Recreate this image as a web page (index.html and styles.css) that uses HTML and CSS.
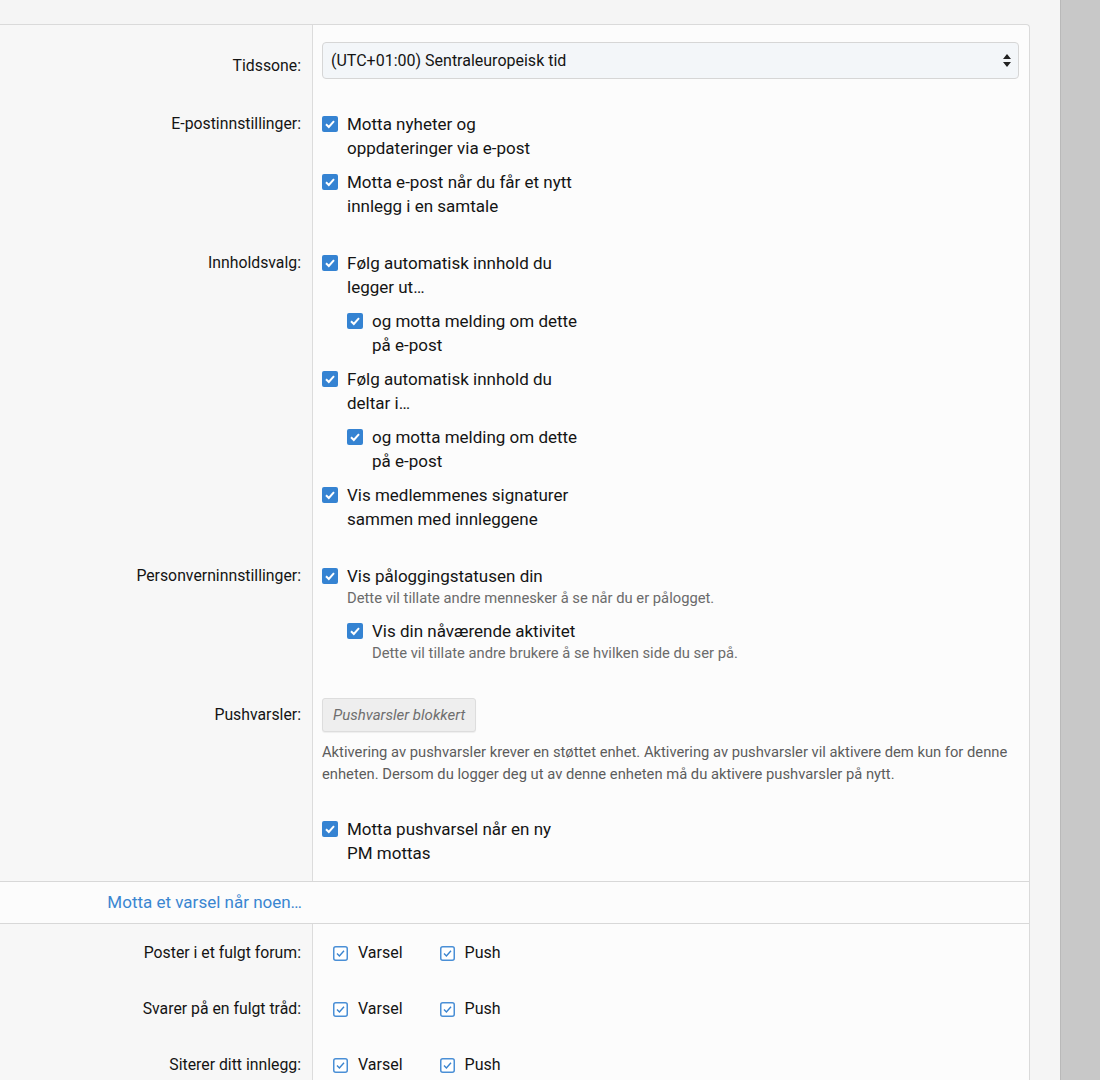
FILE: index.html
```html
<!DOCTYPE html>
<html lang="no">
<head>
  <meta charset="UTF-8" />
  <meta name="viewport" content="width=device-width, initial-scale=1.0"/>
  <title>Innstillinger</title>
  <link rel="stylesheet" href="styles.css">
</head>
<body>

  <div class="page">
    <main class="content">
      <div class="block">

        <dl class="form-row">
          <dt class="label-select">Tidssone:</dt>
          <dd>
            <div class="select">
              <span>(UTC+01:00) Sentraleuropeisk tid</span>
              <svg class="select-arrows" width="8" height="13" viewBox="0 0 8 13">
                <path d="M4 0 L8 5 L0 5 Z M0 8 L8 8 L4 13 Z" fill="#222"/>
              </svg>
            </div>
          </dd>
        </dl>

        <dl class="form-row">
          <dt>E-postinnstillinger:</dt>
          <dd>
            <ul class="choices">
              <li>
                <label class="choice">
                  <span class="check"><svg width="16" height="16" viewBox="0 0 16 16"><rect width="16" height="16" rx="2" fill="#3583d2"/><path d="M4 8.3 L6.8 11 L12 5.2" fill="none" stroke="#fff" stroke-width="2"/></svg></span>
                  <span class="choice-text">Motta nyheter og oppdateringer via e-post</span>
                </label>
              </li>
              <li>
                <label class="choice">
                  <span class="check"><svg width="16" height="16" viewBox="0 0 16 16"><rect width="16" height="16" rx="2" fill="#3583d2"/><path d="M4 8.3 L6.8 11 L12 5.2" fill="none" stroke="#fff" stroke-width="2"/></svg></span>
                  <span class="choice-text">Motta e-post når du får et nytt innlegg i en samtale</span>
                </label>
              </li>
            </ul>
          </dd>
        </dl>

        <dl class="form-row">
          <dt>Innholdsvalg:</dt>
          <dd>
            <ul class="choices">
              <li>
                <label class="choice">
                  <span class="check"><svg width="16" height="16" viewBox="0 0 16 16"><rect width="16" height="16" rx="2" fill="#3583d2"/><path d="M4 8.3 L6.8 11 L12 5.2" fill="none" stroke="#fff" stroke-width="2"/></svg></span>
                  <span class="choice-text">Følg automatisk innhold du legger ut…</span>
                </label>
                <ul class="choices choices-nested">
                  <li>
                    <label class="choice">
                      <span class="check"><svg width="16" height="16" viewBox="0 0 16 16"><rect width="16" height="16" rx="2" fill="#3583d2"/><path d="M4 8.3 L6.8 11 L12 5.2" fill="none" stroke="#fff" stroke-width="2"/></svg></span>
                      <span class="choice-text">og motta melding om dette på e-post</span>
                    </label>
                  </li>
                </ul>
              </li>
              <li>
                <label class="choice">
                  <span class="check"><svg width="16" height="16" viewBox="0 0 16 16"><rect width="16" height="16" rx="2" fill="#3583d2"/><path d="M4 8.3 L6.8 11 L12 5.2" fill="none" stroke="#fff" stroke-width="2"/></svg></span>
                  <span class="choice-text">Følg automatisk innhold du deltar i…</span>
                </label>
                <ul class="choices choices-nested">
                  <li>
                    <label class="choice">
                      <span class="check"><svg width="16" height="16" viewBox="0 0 16 16"><rect width="16" height="16" rx="2" fill="#3583d2"/><path d="M4 8.3 L6.8 11 L12 5.2" fill="none" stroke="#fff" stroke-width="2"/></svg></span>
                      <span class="choice-text">og motta melding om dette på e-post</span>
                    </label>
                  </li>
                </ul>
              </li>
              <li>
                <label class="choice">
                  <span class="check"><svg width="16" height="16" viewBox="0 0 16 16"><rect width="16" height="16" rx="2" fill="#3583d2"/><path d="M4 8.3 L6.8 11 L12 5.2" fill="none" stroke="#fff" stroke-width="2"/></svg></span>
                  <span class="choice-text">Vis medlemmenes signaturer sammen med innleggene</span>
                </label>
              </li>
            </ul>
          </dd>
        </dl>

        <dl class="form-row">
          <dt>Personverninnstillinger:</dt>
          <dd>
            <ul class="choices">
              <li>
                <label class="choice">
                  <span class="check"><svg width="16" height="16" viewBox="0 0 16 16"><rect width="16" height="16" rx="2" fill="#3583d2"/><path d="M4 8.3 L6.8 11 L12 5.2" fill="none" stroke="#fff" stroke-width="2"/></svg></span>
                  <span class="choice-text">Vis påloggingstatusen din</span>
                </label>
                <p class="hint">Dette vil tillate andre mennesker å se når du er pålogget.</p>
                <ul class="choices choices-nested">
                  <li>
                    <label class="choice">
                      <span class="check"><svg width="16" height="16" viewBox="0 0 16 16"><rect width="16" height="16" rx="2" fill="#3583d2"/><path d="M4 8.3 L6.8 11 L12 5.2" fill="none" stroke="#fff" stroke-width="2"/></svg></span>
                      <span class="choice-text">Vis din nåværende aktivitet</span>
                    </label>
                    <p class="hint">Dette vil tillate andre brukere å se hvilken side du ser på.</p>
                  </li>
                </ul>
              </li>
            </ul>
          </dd>
        </dl>

        <dl class="form-row">
          <dt class="label-button">Pushvarsler:</dt>
          <dd>
            <button class="button-disabled" type="button" disabled>Pushvarsler blokkert</button>
            <p class="explain">Aktivering av pushvarsler krever en støttet enhet. Aktivering av pushvarsler vil aktivere dem kun for denne enheten. Dersom du logger deg ut av denne enheten må du aktivere pushvarsler på nytt.</p>
            <ul class="choices push-choices">
              <li>
                <label class="choice">
                  <span class="check"><svg width="16" height="16" viewBox="0 0 16 16"><rect width="16" height="16" rx="2" fill="#3583d2"/><path d="M4 8.3 L6.8 11 L12 5.2" fill="none" stroke="#fff" stroke-width="2"/></svg></span>
                  <span class="choice-text">Motta pushvarsel når en ny PM mottas</span>
                </label>
              </li>
            </ul>
          </dd>
        </dl>

        <h3 class="block-header"><span class="block-header-title">Motta et varsel når noen…</span></h3>

        <dl class="form-row form-row-alert">
          <dt>Poster i et fulgt forum:</dt>
          <dd>
            <ul class="inline-choices">
              <li class="choice"><span class="check"><svg width="15" height="15" viewBox="0 0 15 15"><rect x="0.75" y="0.75" width="13.5" height="13.5" rx="2" fill="#fff" stroke="#4a8fd6" stroke-width="1.5"/><path d="M4 7.6 L6.4 10 L11 4.8" fill="none" stroke="#3a84cf" stroke-width="1.4"/></svg></span>Varsel</li>
              <li class="choice"><span class="check"><svg width="15" height="15" viewBox="0 0 15 15"><rect x="0.75" y="0.75" width="13.5" height="13.5" rx="2" fill="#fff" stroke="#4a8fd6" stroke-width="1.5"/><path d="M4 7.6 L6.4 10 L11 4.8" fill="none" stroke="#3a84cf" stroke-width="1.4"/></svg></span>Push</li>
            </ul>
          </dd>
        </dl>

        <dl class="form-row form-row-alert">
          <dt>Svarer på en fulgt tråd:</dt>
          <dd>
            <ul class="inline-choices">
              <li class="choice"><span class="check"><svg width="15" height="15" viewBox="0 0 15 15"><rect x="0.75" y="0.75" width="13.5" height="13.5" rx="2" fill="#fff" stroke="#4a8fd6" stroke-width="1.5"/><path d="M4 7.6 L6.4 10 L11 4.8" fill="none" stroke="#3a84cf" stroke-width="1.4"/></svg></span>Varsel</li>
              <li class="choice"><span class="check"><svg width="15" height="15" viewBox="0 0 15 15"><rect x="0.75" y="0.75" width="13.5" height="13.5" rx="2" fill="#fff" stroke="#4a8fd6" stroke-width="1.5"/><path d="M4 7.6 L6.4 10 L11 4.8" fill="none" stroke="#3a84cf" stroke-width="1.4"/></svg></span>Push</li>
            </ul>
          </dd>
        </dl>

        <dl class="form-row form-row-alert">
          <dt>Siterer ditt innlegg:</dt>
          <dd>
            <ul class="inline-choices">
              <li class="choice"><span class="check"><svg width="15" height="15" viewBox="0 0 15 15"><rect x="0.75" y="0.75" width="13.5" height="13.5" rx="2" fill="#fff" stroke="#4a8fd6" stroke-width="1.5"/><path d="M4 7.6 L6.4 10 L11 4.8" fill="none" stroke="#3a84cf" stroke-width="1.4"/></svg></span>Varsel</li>
              <li class="choice"><span class="check"><svg width="15" height="15" viewBox="0 0 15 15"><rect x="0.75" y="0.75" width="13.5" height="13.5" rx="2" fill="#fff" stroke="#4a8fd6" stroke-width="1.5"/><path d="M4 7.6 L6.4 10 L11 4.8" fill="none" stroke="#3a84cf" stroke-width="1.4"/></svg></span>Push</li>
            </ul>
          </dd>
        </dl>

      </div>
    </main>
    <div class="side"></div>
  </div>

</body>
</html>
```

FILE: styles.css
```css
body {
  margin: 0;
  font-family: Roboto, "Noto Sans", sans-serif;
  background: #f5f5f5;
  color: #141414;
}

.page {
  display: flex;
  min-height: 1080px;
}

.content {
  flex: 1;
  padding: 24px 30px 0 0;
}

.side {
  width: 40px;
  background: #c8c8c8;
  box-shadow: inset 1px 0 0 #b9b9b9;
}

/* settings block */
.block {
  background: #fcfcfc;
  border: 1px solid #dadada;
  border-left: none;
  border-bottom: none;
  border-radius: 0 4px 0 0;
  overflow: hidden;
}

.form-row {
  display: flex;
  margin: 0;
}

.form-row dt {
  flex: 0 0 313px;
  box-sizing: border-box;
  padding: 17px 11px 0 0;
  text-align: right;
  font-size: 15.8px;
  line-height: 24px;
  background: #f7f7f7;
  border-right: 1px solid #dcdcdc;
}

.form-row dd {
  flex: 1;
  margin: 0;
  padding: 17px 10px 16px 9px;
}

.form-row dt.label-select {
  padding-top: 29px;
}

.form-row dt.label-button {
  padding-top: 24px;
}

/* fake select box */
.select {
  display: flex;
  align-items: center;
  justify-content: space-between;
  height: 37px;
  box-sizing: border-box;
  padding: 0 7px 0 8px;
  background: #f3f6f9;
  border: 1px solid #d6d6d6;
  border-radius: 4px;
  font-size: 16px;
}

/* checkbox lists */
.choices {
  list-style: none;
  margin: 0;
  padding: 0;
}

.choices > li + li {
  margin-top: 10px;
}

.choices-nested {
  margin-top: 10px;
  padding-left: 25px;
}

.choice {
  display: flex;
  align-items: flex-start;
  font-size: 17px;
  line-height: 24px;
}

.check {
  display: flex;
  flex: 0 0 16px;
  margin: 4px 9px 0 0;
}

.choice-text {
  max-width: 232px;
}

.choices-nested .choice-text {
  max-width: 214px;
}

.hint {
  margin: 0 0 0 25px;
  font-size: 14.75px;
  line-height: 20px;
  color: #6b6b6b;
}

.hint + .choices-nested {
  margin-top: 11px;
}

/* push notifications */
.button-disabled {
  display: block;
  height: 34px;
  margin-top: 2px;
  padding: 0 10px;
  font-family: inherit;
  font-size: 15px;
  font-style: italic;
  color: #6f6f6f;
  background: #eeeeee;
  border: 1px solid #dddddd;
  border-radius: 3px;
  box-shadow: 0 1px 1px rgba(0, 0, 0, 0.06);
}

.explain {
  margin: 9px 0 0;
  font-size: 14.75px;
  line-height: 22px;
  color: #5c5c5c;
}

.push-choices {
  margin-top: 32px;
}

/* alert preferences */
.block-header {
  margin: 0;
  padding: 8px 0 9px;
  font-size: 17px;
  font-weight: normal;
  line-height: 24px;
  color: #3a86d1;
  border-top: 1px solid #d8d8d8;
  border-bottom: 1px solid #d8d8d8;
}

.block-header-title {
  display: block;
  width: 313px;
  box-sizing: border-box;
  padding-right: 11px;
  text-align: right;
}

.form-row-alert dt {
  padding-top: 17px;
}

.form-row-alert dd {
  padding: 17px 10px 15px 20px;
}

.inline-choices {
  display: flex;
  list-style: none;
  margin: 0;
  padding: 0;
}

.inline-choices .choice {
  align-items: center;
  font-size: 16px;
  margin-right: 37px;
}

.inline-choices .check {
  flex: 0 0 15px;
  margin: 0 10px 0 0;
}
```
